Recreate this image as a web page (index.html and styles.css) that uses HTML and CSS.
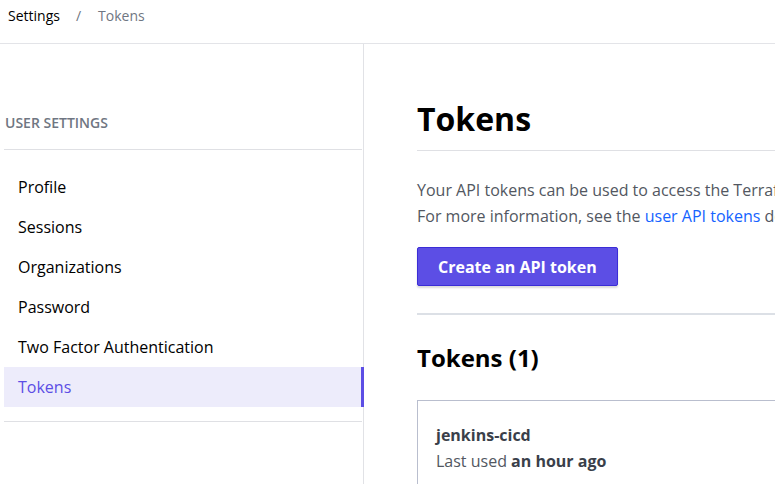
FILE: index.html
```html
<!DOCTYPE html>
<html lang="en">
<head>
<meta charset="utf-8">
<title>Tokens | Settings</title>
<link rel="stylesheet" href="styles.css">
</head>
<body>
<header class="breadcrumb">
  <a class="crumb crumb-root" href="#">Settings</a>
  <span class="crumb-sep">/</span>
  <span class="crumb crumb-current">Tokens</span>
</header>
<div class="layout">
  <aside class="sidebar">
    <div class="sidebar-title">User Settings</div>
    <nav class="nav">
      <a class="nav-item" href="#">Profile</a>
      <a class="nav-item" href="#">Sessions</a>
      <a class="nav-item" href="#">Organizations</a>
      <a class="nav-item" href="#">Password</a>
      <a class="nav-item" href="#">Two Factor Authentication</a>
      <a class="nav-item active" href="#">Tokens</a>
    </nav>
  </aside>
  <main class="main">
    <h1 class="page-title">Tokens</h1>
    <p class="intro">Your API tokens can be used to access the Terraform Cloud API and perform all the actions your user account is entitled to.<br>For more information, see the <a class="link" href="#">user API tokens</a> documentation.</p>
    <button class="btn-primary" type="button">Create an API token</button>
    <hr class="divider">
    <h2 class="section-title">Tokens (1)</h2>
    <div class="token-card">
      <div class="token-name">jenkins-cicd</div>
      <div class="token-meta">Last used <strong>an hour ago</strong></div>
    </div>
  </main>
</div>
</body>
</html>
```
FILE: styles.css
```css
* { box-sizing: border-box; }
html, body { margin: 0; padding: 0; }
body {
  font-family: "Open Sans", "Noto Sans", sans-serif;
  color: #000;
  background: #fff;
  overflow: hidden;
  height: 484px;
}
a { text-decoration: none; }

.breadcrumb {
  height: 44px;
  border-bottom: 1px solid #e3e4e8;
  display: flex;
  align-items: flex-start;
  padding: 6px 0 0 8px;
  font-size: 14px;
  line-height: 20px;
}
.crumb-root { color: #000; }
.crumb-sep { color: #6f7682; margin: 0 17px 0 16px; }
.crumb-current { color: #6f7682; }

.layout {
  display: flex;
  height: 440px;
}
.sidebar {
  flex: 0 0 364px;
  border-right: 1px solid #e1e2e6;
  padding-left: 4px;
  padding-top: 69px;
}
.sidebar-title {
  font-size: 14px;
  line-height: 20px;
  font-weight: 600;
  text-transform: uppercase;
  color: #6f7682;
  padding: 0 0 16px 1px;
  border-bottom: 1px solid #dfe0e4;
  margin-right: 1px;
}
.nav {
  display: flex;
  flex-direction: column;
  padding: 17px 0 14px;
  border-bottom: 1px solid #dfe0e4;
  margin-right: 1px;
}
.nav-item {
  height: 40px;
  display: flex;
  align-items: center;
  padding-left: 14px;
  font-size: 16px;
  color: #000;
}
.nav-item.active {
  background: #edecfb;
  color: #5c4ee5;
  font-weight: 500;
  border-right: 3px solid #5c4ee5;
  margin-right: -2px;
}

.main {
  flex: 0 0 auto;
  width: 1300px;
  padding-left: 53px;
}
.page-title {
  margin: 55px 0 0;
  font-size: 32px;
  line-height: 40px;
  font-weight: 700;
  padding-bottom: 11px;
  border-bottom: 1px solid #dfe0e4;
}
.intro {
  margin: 26px 0 0;
  font-size: 16px;
  line-height: 26px;
  color: #525761;
}
.link { color: #1563ff; }
.btn-primary {
  margin-top: 18px;
  height: 39px;
  padding: 0 20px;
  background: #5c4ee5;
  border: 1px solid #3b2dd6;
  border-radius: 2px;
  color: #fff;
  font-family: inherit;
  font-size: 16px;
  font-weight: 700;
  box-shadow: 0 2px 2px rgba(0, 0, 0, 0.14);
}
.divider {
  margin: 27px 0 0;
  border: 0;
  height: 2px;
  background: #dce0e6;
}
.section-title {
  margin: 27px 0 0;
  font-size: 24px;
  line-height: 32px;
  font-weight: 700;
}
.token-card {
  margin-top: 26px;
  border: 1px solid #b9bece;
  padding: 21px 18px;
}
.token-name {
  font-size: 16px;
  line-height: 26px;
  font-weight: 700;
  color: #3a3f4a;
}
.token-meta {
  font-size: 16px;
  line-height: 26px;
  color: #525761;
}
.token-meta strong { font-weight: 700; color: #3a3f4a; }
```
